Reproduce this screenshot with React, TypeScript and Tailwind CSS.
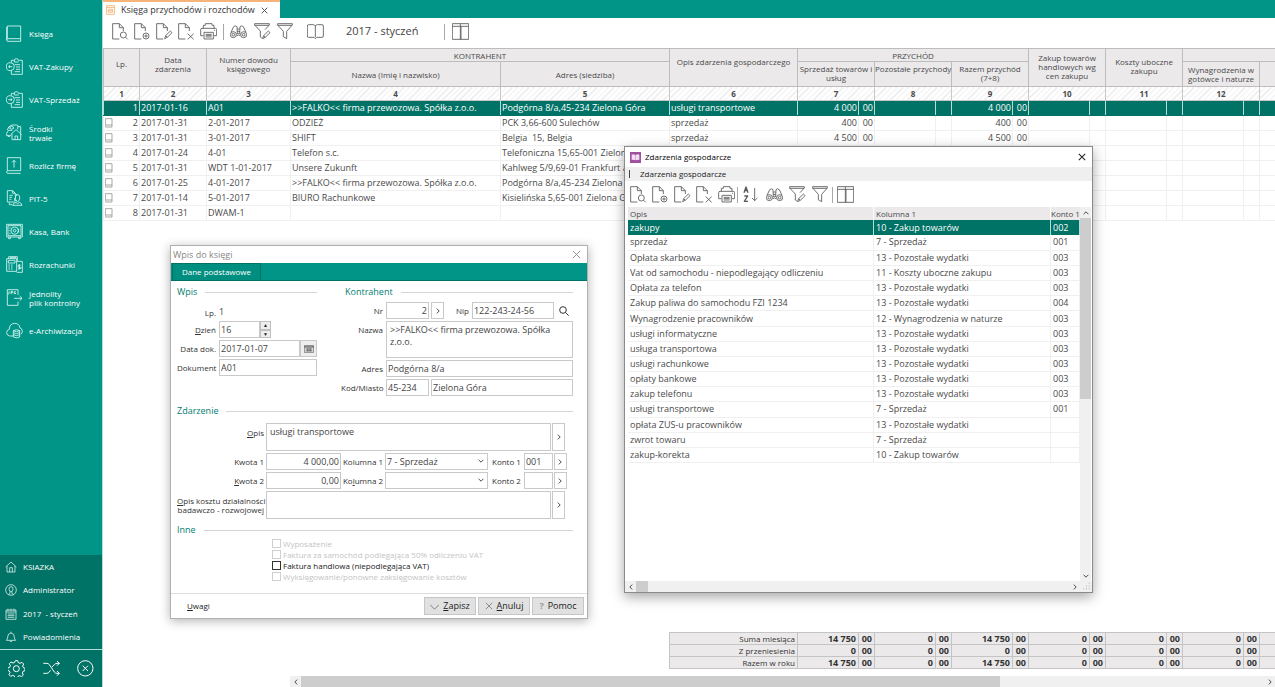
import type { ReactNode } from 'react';

type IconProps = { name: string };

const search = <path d="M41 43l6 6M25 36a9 9 0 1 0 18 0a9 9 0 1 0-18 0" />;
const page = <path d="M22 48H2V2h20l12 12v10M22 2v12h12" />;
const pencil = <path d="M26 47l3-9 14-14 5 5-14 14zM29 38l5 5" />;

const toolIcons: Record<string, ReactNode> = {
  preview: <>{page}{search}</>,
  add: <>{page}<circle cx="36" cy="39" r="9" /><path d="M36 34v10M31 39h10" /></>,
  edit: <>{page}{pencil}</>,
  remove: <>{page}<path d="M29 32l18 17M47 32l-18 17" /></>,
  print: (
    <>
      <path d="M10 16V7h6V2h20v5h6v9M10 38H2V20q0-4 4-4h40q4 0 4 4v18h-8" />
      <path d="M12 28h28v20H12zM17 34h18M17 38h18M17 42h18M42 22h3" />
    </>
  ),
  find: (
    <>
      <circle cx="10" cy="35" r="9" />
      <circle cx="41" cy="35" r="9" />
      <circle cx="10" cy="35" r="4" />
      <circle cx="41" cy="35" r="4" />
      <path d="M19 33q6-4 13 0M20 38q6-4 11 0M3 28l8-17q6-5 10 0l1 20M48 28l-8-17q-6-5-10 0l-1 20M22 18h7M21 25h9" />
    </>
  ),
  filterEdit: <><path d="M19 42V24L2 6V2h44v4L33 20M2 7h43M19 42l6 4" />{pencil}</>,
  filter: <path d="M2 2h44v4L29 25v22l-10-6V25L2 6zM2 7h43" />,
  book: <path d="M25 9v34M25 9q-2-4-6-4H5Q1 5 1 9v30q0 4 4 4h16l4 4 4-4h16q4 0 4-4V9q0-4-4-4H31q-4 0-6 4" />,
  columns: <path d="M1 2h49v47H1zM1 10h49M25 2v47M27 10v39" />,
  sort: (
    <>
      <path strokeWidth="4" d="M3 20L9 3l6 17M5 14h8M4 30h10L4 46h11" />
      <path d="M35 6v38M27 36l8 8 8-8" />
    </>
  ),
};

const ToolIcon = ({ name }: IconProps) => (
  <svg viewBox="0 0 51 51" className="h-[17px] w-[17px]" fill="none" stroke="currentColor" strokeWidth="2.6" strokeLinejoin="round">
    {toolIcons[name]}
  </svg>
);

const ToolButton = ({ name, label }: { name: string; label: string }) => (
  <button type="button" aria-label={label} title={label} className="flex h-5 w-[22px] shrink-0 items-center justify-center text-[#5a5a5a] hover:bg-gray-100">
    <ToolIcon name={name} />
  </button>
);

const Divider = () => <span className="h-4 w-px shrink-0 bg-[#a8a8a8]" />;

const navIcons: Record<string, ReactNode> = {
  ksiega: <path d="M4 3h40v38H4zM4 41q-4 4 0 8h40v-8M2 46V6" />,
  zakupy: (
    <path d="M16 14V7h9q0-5 6-5t6 5h12v42H16V38M25 7v5h13M26 20h16M30 27h12M30 34h12M26 41h16M25 26a12 12 0 1 1-24 0a12 12 0 1 1 24 0M19 26H8M12 22l-4 4 4 4" />
  ),
  sprzedaz: (
    <path d="M16 14V7h9q0-5 6-5t6 5h12v42H16V38M25 7v5h13M26 20h16M30 27h12M30 34h12M26 41h16M25 26a12 12 0 1 1-24 0a12 12 0 1 1 24 0M7 26h11M14 22l4 4-4 4" />
  ),
  srodki: (
    <path d="M14 32l16-15 17 15M18 30v17h26V30M27 47V36h8v11M35 16V8h9v20M2 28l5-9h12M2 28v7h12M6 35a3 3 0 1 0 6 0M11 13a6 6 0 1 1 12 0q-6 5-12 0M4 18q2-12 14-15h14q6 2 8 6" />
  ),
  rozlicz: <path d="M4 2h40v39H4zM4 41q-4 4 0 8h40M24 32V10M18 16l6-6 6 6" />,
  pit: (
    <path d="M26 36H4V2h16l8 8v10M20 2v8h8M10 16h10M10 22h8M10 28h6M30 14q12-2 11 10 0 9-6 11-7-2-7-11t6-10M20 46q2-8 10-9l5 4 5-4q7 2 8 9zM26 24v8h6M10 38v6h8" />
  ),
  kasa: (
    <>
      <path d="M2 4h47v38H2zM6 8h39v30H6zM8 42v5h5v-5M38 42v5h5v-5M10 15h4M10 23h4M10 31h4M38 17v12" />
      <circle cx="26" cy="23" r="11" />
      <circle cx="26" cy="23" r="4" />
    </>
  ),
  rozrachunki: (
    <path d="M34 14V2H8v6M2 8h30v38H2zM7 13h20v8H7zM7 27h5M15 27h5M7 33h5M15 33h5M7 39h5M15 39h5M32 16h17v33H32M40 24v17M44 28q-8-3-8 2t8 5-8 4M12 5h18" />
  ),
  jpk: <path d="M36 18V2H4v47h32V38M24 28h24M41 21l7 7-7 7M9 7v7q-3 3-3 0M15 15V7h5v4h-5M25 7v8M30 7l-4 4 4 4" />,
  archiwum: (
    <path d="M22 42H11Q1 40 2 31q1-8 8-9 0-17 16-18 14 0 16 14 8 2 7 11-1 6-5 8M22 26q10-6 19 0v19q-9 5-19 0zM22 26q9 6 19 0M22 32q9 6 19 0M22 38q9 6 19 0" />
  ),
};

const navItems = [
  { icon: 'ksiega', label: 'Księga' },
  { icon: 'zakupy', label: 'VAT-Zakupy' },
  { icon: 'sprzedaz', label: 'VAT-Sprzedaż' },
  { icon: 'srodki', label: 'Środki\ntrwałe' },
  { icon: 'rozlicz', label: 'Rozlicz firmę' },
  { icon: 'pit', label: 'PIT-5' },
  { icon: 'kasa', label: 'Kasa, Bank' },
  { icon: 'rozrachunki', label: 'Rozrachunki' },
  { icon: 'jpk', label: 'Jednolity\nplik kontrolny' },
  { icon: 'archiwum', label: 'e-Archiwizacja' },
];

const statusItems = [
  { label: 'KSIAZKA', d: 'M2 18L18 3l16 15M6 15v18h24V15M14 33V20h8v13' },
  { label: 'Administrator', d: 'M34 18a16 16 0 1 1-32 0a16 16 0 1 1 32 0M18 8q7 0 6 8-1 6-6 7-5-1-6-7-1-8 6-8M15 22v7l-5 3M21 22v7l5 3' },
  { label: '2017  - styczeń', d: 'M3 6h30v28H3zM3 12h30M9 2v7M18 2v7M27 2v7M8 18h20M8 23h20M8 28h20' },
  { label: 'Powiadomienia', d: 'M4 28q4-3 4-10Q8 7 18 6q10 1 10 12 0 7 4 10zM14 29q4 7 8 0M18 2v4' },
];

const gearPoints = 'M22 2h7l2 6 5 2 6-3 5 5-3 6 2 5 5 2v7l-6 2-2 5 3 6-5 5-6-3-5 2-2 5h-7l-2-6-5-2-6 3-5-5 3-6-2-5-5-2v-7l6-2 2-5-3-6 5-5 6 3 5-2z';

const Sidebar = () => (
  <aside className="flex w-[103px] shrink-0 flex-col border-r border-[#b5dcd7] bg-[#009587] text-[8px] font-medium text-white">
    <nav className="flex flex-1 flex-col pt-[17px]">
      {navItems.map((item) => (
        <a key={item.label} href="#" className="flex h-[33px] items-center gap-[6px] pl-[6px] hover:bg-[#007266]">
          <svg viewBox="0 0 51 51" className="h-[17px] w-[17px] shrink-0" fill="none" stroke="#e6fffb" strokeWidth="2.4">
            {navIcons[item.icon]}
          </svg>
          <span className="whitespace-pre leading-[9px]">{item.label}</span>
        </a>
      ))}
    </nav>
    <div className="bg-[#007266]">
      <div className="grid h-[95px] grid-rows-4 border-b border-[#b5dcd7]">
        {statusItems.map((item) => (
          <a key={item.label} href="#" className="flex items-center gap-[6px] pl-[5px]">
            <svg viewBox="0 0 36 36" className="h-3 w-3 shrink-0" fill="none" stroke="#d8f0ec" strokeWidth="2.4">
              <path d={item.d} />
            </svg>
            <span className="whitespace-pre">{item.label}</span>
          </a>
        ))}
      </div>
      <div className="flex h-[37px] items-center justify-between px-2">
        <button type="button" aria-label="Ustawienia">
          <svg viewBox="0 0 51 51" className="h-[17px] w-[17px]" fill="none" stroke="white" strokeWidth="3">
            <path d={gearPoints} />
            <circle cx="25" cy="26" r="9" />
          </svg>
        </button>
        <button type="button" aria-label="Przełącz">
          <svg viewBox="0 0 51 51" className="h-[17px] w-[17px]" fill="none" stroke="white" strokeWidth="3">
            <path d="M1 10h10q5 0 8 4l15 22q3 4 8 4h7M1 40h10q5 0 8-4l3-5M27 21l7-7q3-4 8-4h7M42 3l7 7-7 7M42 33l7 7-7 7" />
          </svg>
        </button>
        <button type="button" aria-label="Zamknij program">
          <svg viewBox="0 0 51 51" className="h-[17px] w-[17px]" fill="none" stroke="white" strokeWidth="3">
            <circle cx="25" cy="25" r="23" />
            <path d="M17 17l16 16M33 17L17 33" />
          </svg>
        </button>
      </div>
    </div>
  </aside>
);

const entries = [
  { date: '2017-01-16', doc: 'A01', name: '>>FALKO<< firma przewozowa. Spółka z.o.o.', address: 'Podgórna 8/a,45-234 Zielona Góra', event: 'usługi transportowe', amount: '4 000' },
  { date: '2017-01-31', doc: '2-01-2017', name: 'ODZIEŻ', address: 'PCK 3,66-600 Sulechów', event: 'sprzedaż', amount: '400' },
  { date: '2017-01-31', doc: '3-01-2017', name: 'SHIFT', address: 'Belgia  15, Belgia', event: 'sprzedaż', amount: '4 500' },
  { date: '2017-01-24', doc: '4-01', name: 'Telefon s.c.', address: 'Telefoniczna 15,65-001 Zielona Góra', event: '', amount: '' },
  { date: '2017-01-31', doc: 'WDT 1-01-2017', name: 'Unsere Zukunft', address: 'Kahlweg 5/9,69-01 Frankfurt am', event: '', amount: '' },
  { date: '2017-01-25', doc: '4-01-2017', name: '>>FALKO<< firma przewozowa. Spółka z.o.o.', address: 'Podgórna 8/a,45-234 Zielona Góra', event: '', amount: '' },
  { date: '2017-01-14', doc: '5-01-2017', name: 'BIURO Rachunkowe', address: 'Kisielińska 5,65-001 Zielona Góra', event: '', amount: '' },
  { date: '2017-01-31', doc: 'DWAM-1', name: '', address: '', event: '', amount: '' },
];

type HeadProps = { children?: ReactNode; rows?: number; cols?: number; className?: string };

const Head = ({ children, rows, cols, className = '' }: HeadProps) => (
  <th rowSpan={rows} colSpan={cols} className={`border border-[#bdbdbd] bg-[#ebe9ea] font-medium leading-[9px] ${className}`}>
    {children}
  </th>
);

const MoneyCols = () => (
  <>
    <col className="w-[61px]" />
    <col className="w-4" />
  </>
);

const LedgerTable = () => (
  <table className="w-[1233px] table-fixed border-collapse text-[9px] text-[#4a4a4a]">
    <colgroup>
      <col className="w-9" />
      <col className="w-[67px]" />
      <col className="w-[84px]" />
      <col className="w-[210px]" />
      <col className="w-[169px]" />
      <col className="w-32" />
      <MoneyCols />
      <MoneyCols />
      <MoneyCols />
      <MoneyCols />
      <MoneyCols />
      <MoneyCols />
      <MoneyCols />
    </colgroup>
    <thead className="text-[8px]">
      <tr className="h-[13px]">
        <Head rows={2} className="pb-2">Lp.</Head>
        <Head rows={2} className="pb-2">Data<br />zdarzenia</Head>
        <Head rows={2} className="pb-2">Numer dowodu<br />księgowego</Head>
        <Head cols={2}>KONTRAHENT</Head>
        <Head rows={2} className="pt-2 align-top">Opis zdarzenia gospodarczego</Head>
        <Head cols={6}>PRZYCHÓD</Head>
        <Head rows={2} cols={2} className="px-2 pb-[3px]">Zakup towarów handlowych wg cen zakupu</Head>
        <Head rows={2} cols={2} className="px-2 pt-2 align-top">Koszty uboczne zakupu</Head>
        <Head cols={4} />
      </tr>
      <tr className="h-[25px]">
        <Head>Nazwa (Imię i nazwisko)</Head>
        <Head>Adres (siedziba)</Head>
        <Head cols={2} className="whitespace-nowrap pt-[2px] align-top">Sprzedaż towarów i<br />usług</Head>
        <Head cols={2} className="whitespace-nowrap pt-[2px] align-top">Pozostałe przychody</Head>
        <Head cols={2} className="pt-[2px] align-top">Razem przychód<br />(7+8)</Head>
        <Head cols={2}>Wynagrodzenia w gotówce i naturze</Head>
        <Head cols={2} />
      </tr>
      <tr className="h-[14px]">
        {[1, 2, 3, 4, 5, 6, 7, 8, 9, 10, 11, 12, ''].map((n, i) => (
          <th
            key={i}
            colSpan={i > 5 ? 2 : 1}
            className="border-x border-b border-[#c8c8c8] bg-[repeating-linear-gradient(135deg,#fff_0,#fff_3px,#e9e9e9_3px,#e9e9e9_4px)] font-bold leading-[10px]"
          >
            {n}
          </th>
        ))}
      </tr>
    </thead>
    <tbody className="leading-3">
      {entries.map((entry, index) => {
        const selected = index === 0;
        const cell = `overflow-hidden whitespace-pre border px-px ${selected ? 'border-x-[#b5dcd7] border-y-[#007266]' : 'border-[#f0f0f0]'}`;
        return (
          <tr key={index} className={`h-[15px] ${selected ? 'bg-[#007266] text-white' : 'bg-white'}`}>
            <td className={cell}>
              <span className="flex items-center justify-between">
                {selected ? <span /> : (
                  <svg viewBox="3 0 30 30" className="h-[10px] w-[10px]" fill="none" stroke="#999" strokeWidth="2.6">
                    <path d="M4 2h20v19H4zM4 21q-3 3 0 6h20v-6" />
                  </svg>
                )}
                {index + 1}
              </span>
            </td>
            <td className={cell}>{entry.date}</td>
            <td className={cell}>{entry.doc}</td>
            <td className={cell}>{entry.name}</td>
            <td className={cell}>{entry.address}</td>
            <td className={cell}>{entry.event}</td>
            {[0, 1, 2, 3, 4, 5, 6].map((col) => {
              const filled = (col === 0 || col === 2) && entry.amount;
              return [
                <td key={`${col}a`} className={`${cell} text-right`}>{filled ? entry.amount : ''}</td>,
                <td key={`${col}b`} className={`${cell} text-right`}>{filled ? '00' : ''}</td>,
              ];
            })}
          </tr>
        );
      })}
    </tbody>
  </table>
);

const totals = [
  { label: 'Suma miesiąca', values: ['14 750', '0', '14 750', '0', '0', '0'] },
  { label: 'Z przeniesienia', values: ['0', '0', '0', '0', '0', '0'] },
  { label: 'Razem w roku', values: ['14 750', '0', '14 750', '0', '0', '0'] },
];

const TotalsTable = () => (
  <table className="ml-[566px] w-[667px] table-fixed border-collapse bg-[#ebe9ea] text-[9px] leading-[11px] text-[#333]">
    <colgroup>
      <col className="w-32" />
      <MoneyCols />
      <MoneyCols />
      <MoneyCols />
      <MoneyCols />
      <MoneyCols />
      <MoneyCols />
      <MoneyCols />
    </colgroup>
    <tbody>
      {totals.map((row) => (
        <tr key={row.label} className="h-3">
          <th className="border border-[#c4c4c4] px-[2px] text-right text-[8px] font-normal">{row.label}</th>
          {row.values.map((value, i) => [
            <td key={`${i}a`} className="border border-[#c4c4c4] px-[2px] text-right font-bold">{value}</td>,
            <td key={`${i}b`} className="border border-[#c4c4c4] px-[2px] text-right font-bold">00</td>,
          ])}
          <td className="border border-[#c4c4c4]" />
          <td className="border border-[#c4c4c4]" />
        </tr>
      ))}
    </tbody>
  </table>
);

const chevrons = { left: 'M7 1L3 5l4 4', right: 'M3 1l4 4-4 4', up: 'M1 7l4-4 4 4', down: 'M1 3l4 4 4-4' };

const Chevron = ({ to }: { to: keyof typeof chevrons }) => (
  <svg viewBox="0 0 10 10" className="h-[6px] w-[6px]" fill="none" stroke="#444" strokeWidth="1.6">
    <path d={chevrons[to]} />
  </svg>
);

const ScrollArrow = ({ to, label }: { to: keyof typeof chevrons; label: string }) => (
  <button type="button" aria-label={label} className="flex h-[11px] w-[11px] shrink-0 items-center justify-center">
    <Chevron to={to} />
  </button>
);

const field = 'block h-[17px] w-full min-w-0 border border-[#c9c9c9] bg-white px-px text-[9px] text-[#444] outline-none focus:border-[#009587]';
const area = 'block w-full resize-none overflow-hidden border border-[#c9c9c9] bg-white px-[3px] py-[2px] text-[9px] leading-3 text-[#444] outline-none focus:border-[#009587]';
const fieldLabel = 'whitespace-nowrap text-right text-[8px] text-[#333]';

const PickButton = ({ label, tall }: { label: string; tall?: boolean }) => (
  <button type="button" aria-label={label} className={`flex w-[13px] shrink-0 items-center justify-center border border-[#c9c9c9] bg-white ${tall ? 'h-7' : 'h-[17px]'}`}>
    <Chevron to="right" />
  </button>
);

const SectionTitle = ({ children }: { children: ReactNode }) => (
  <h3 className="flex h-4 items-center gap-2 text-[9px] text-[#007d70]">
    {children}
    <span className="h-px flex-1 bg-[#d5d5d5]" />
  </h3>
);

const checks = [
  { id: 'equipment', label: 'Wyposażenie', enabled: false },
  { id: 'car', label: 'Faktura za samochód podlegająca 50% odliczeniu VAT', enabled: false },
  { id: 'trade', label: 'Faktura handlowa (niepodlegająca VAT)', enabled: true },
  { id: 'rebook', label: 'Wyksięgowanie/ponowne zaksięgowanie kosztów', enabled: false },
];

const dialogButton = 'flex h-[18px] w-13 items-center justify-center gap-1 border border-[#c6c6c6] bg-[#e1e1e1] text-[9px] text-[#222]';

const EntryDialog = () => (
  <section role="dialog" aria-label="Wpis do księgi" className="absolute left-[170px] top-[245px] w-[418px] border border-[#b0b0b0] bg-white shadow-[0_2px_10px_rgba(0,0,0,0.3)]">
    <header className="flex h-[17px] items-center justify-between pl-[2px] pr-[6px] text-[9px] text-[#888]">
      <h2>Wpis do księgi</h2>
      <button type="button" aria-label="Zamknij">
        <svg viewBox="0 0 10 10" className="h-[9px] w-[9px]" stroke="#888"><path d="M1 1l8 8M9 1L1 9" /></svg>
      </button>
    </header>
    <div role="tablist" className="flex h-[18px] border-b border-[#007266] bg-[#009587] pl-[1px]">
      <button type="button" role="tab" aria-selected="true" className="w-[89px] border-x border-t border-[#007266] bg-[#008e80] text-[8px] font-medium leading-[14px] text-white">
        Dane podstawowe
      </button>
    </div>

    <form onSubmit={(e) => e.preventDefault()}>
      <div className="pl-[6px] pr-[14px] pt-[3px]">
        <div className="grid grid-cols-[140px_1fr] gap-x-6">
          <div>
            <SectionTitle>Wpis</SectionTitle>
            <div className="mt-[2px] grid grid-cols-[39px_1fr] items-center gap-x-[3px] gap-y-[2px]">
              <span className={`${fieldLabel} pt-1`}>Lp.</span>
              <span className="h-[17px] pt-1 text-[9px] leading-3 text-[#444]">1</span>
              <label htmlFor="day" className={fieldLabel}><u>D</u>zień</label>
              <div className="flex">
                <div className="w-[41px]"><input id="day" className={field} defaultValue="16" /></div>
                <div className="flex flex-col">
                  {['▲', '▼'].map((arrow) => (
                    <button key={arrow} type="button" aria-label={arrow === '▲' ? 'Więcej' : 'Mniej'} className="flex h-[9px] w-[11px] items-center justify-center border border-[#c0c0c0] bg-[#eee] text-[5px] leading-none text-[#222] last:h-2">
                      {arrow}
                    </button>
                  ))}
                </div>
              </div>
              <label htmlFor="docDate" className={fieldLabel}>Data dok.</label>
              <div className="flex">
                <input id="docDate" className={field} defaultValue="2017-01-07" />
                <button type="button" aria-label="Kalendarz" className="flex h-[17px] w-[17px] shrink-0 items-center justify-center border border-[#c9c9c9] bg-[#eee]">
                  <svg viewBox="0 0 30 24" className="h-2 w-[10px]" fill="none" stroke="#555" strokeWidth="2"><path d="M1 2h28v20H1zM1 4h28M1 7h28M5 12h20M5 17h20M10 9v11M15 9v11M20 9v11" /></svg>
                </button>
              </div>
              <label htmlFor="docNo" className={fieldLabel}>Dokument</label>
              <input id="docNo" className={field} defaultValue="A01" />
            </div>
          </div>

          <div>
            <div className="pl-1"><SectionTitle>Kontrahent</SectionTitle></div>
            <div className="mt-[2px] grid grid-cols-[42px_1fr] items-center gap-x-[3px] gap-y-[2px]">
              <label htmlFor="no" className={fieldLabel}>Nr</label>
              <div className="flex items-center">
                <div className="mr-[2px] w-[43px]"><input id="no" className={`${field} text-right`} defaultValue="2" /></div>
                <PickButton label="Wybierz kontrahenta" />
                <label htmlFor="nip" className={`${fieldLabel} ml-3 mr-[3px]`}>Nip</label>
                <div className="w-[82px]"><input id="nip" className={field} defaultValue="122-243-24-56" /></div>
                <button type="button" aria-label="Szukaj" className="ml-[5px]">
                  <svg viewBox="0 0 30 30" className="h-[10px] w-[10px]" fill="none" stroke="#333" strokeWidth="3"><circle cx="12" cy="12" r="10" /><path d="M19 19l10 10" /></svg>
                </button>
              </div>
              <label htmlFor="name" className={`${fieldLabel} self-start pt-[3px]`}>Nazwa</label>
              <textarea id="name" className={`${area} h-[37px]`} defaultValue=">>FALKO<< firma przewozowa. Spółka z.o.o." />
              <label htmlFor="address" className={fieldLabel}>Adres</label>
              <input id="address" className={field} defaultValue="Podgórna 8/a" />
              <label htmlFor="zip" className={fieldLabel}>Kod/Miasto</label>
              <div className="flex gap-[2px]">
                <div className="w-[43px] shrink-0"><input id="zip" className={field} defaultValue="45-234" /></div>
                <input aria-label="Miasto" className={field} defaultValue="Zielona Góra" />
              </div>
            </div>
          </div>
        </div>

        <div className="mt-[7px]">
          <SectionTitle>Zdarzenie</SectionTitle>
          <div className="mt-1 grid grid-cols-[87px_299px] items-center gap-x-[2px] gap-y-[2px]">
            <label htmlFor="desc" className={`${fieldLabel} self-start pt-1`}><u>O</u>pis</label>
            <div className="flex gap-px"><textarea id="desc" className={`${area} h-7`} defaultValue="usługi transportowe" /><PickButton label="Wybierz opis" tall /></div>
            {[1, 2].map((n) => [
              <label key={`label${n}`} htmlFor={`amount${n}`} className={fieldLabel}>{n === 1 ? 'Kwota 1' : <><u>K</u>wota 2</>}</label>,
              <div key={`row${n}`} className="flex items-center">
                <div className="w-[75px] shrink-0"><input id={`amount${n}`} className={`${field} text-right`} defaultValue={n === 1 ? '4 000,00' : '0,00'} /></div>
                <label htmlFor={`column${n}`} className={`${fieldLabel} w-[42px] shrink-0`}>{n === 1 ? 'Kolumna 1' : <>Ko<u>l</u>umna 2</>}</label>
                <div className="relative ml-[2px] w-[103px] shrink-0">
                  <select id={`column${n}`} className={`${field} appearance-none`} defaultValue={n === 1 ? '7' : ''}>
                    <option value=""></option>
                    <option value="7">7 - Sprzedaż</option>
                  </select>
                  <span className="pointer-events-none absolute right-1 top-[5px]"><Chevron to="down" /></span>
                </div>
                <label htmlFor={`account${n}`} className={`${fieldLabel} ml-1 mr-[3px] flex-1`}>Konto {n}</label>
                <div className="mr-px w-[29px] shrink-0"><input id={`account${n}`} className={field} defaultValue={n === 1 ? '001' : ''} /></div>
                <PickButton label={`Wybierz konto ${n}`} />
              </div>,
            ])}
            <label htmlFor="research" className={`${fieldLabel} leading-[9px]`}><u>O</u>pis kosztu działalności<br />badawczo - rozwojowej</label>
            <div className="flex gap-px"><textarea id="research" className={`${area} h-7`} /><PickButton label="Wybierz opis kosztu" tall /></div>
          </div>
        </div>

        <div className="mt-[3px]">
          <SectionTitle>Inne</SectionTitle>
          <div className="ml-[95px] flex flex-col text-[8px] leading-[11px]">
            {checks.map((check) => (
              <label key={check.id} htmlFor={check.id} className={`flex h-[11px] items-center gap-[2px] ${check.enabled ? 'font-medium text-[#222]' : 'text-[#c4c4c4]'}`}>
                <input id={check.id} type="checkbox" disabled={!check.enabled} className="h-[9px] w-[9px] appearance-none border border-[#333] bg-white checked:bg-[#009587] disabled:border-[#d0d0d0]" />
                {check.label}
              </label>
            ))}
          </div>
        </div>
      </div>

      <footer className="mt-[11px] flex h-[25px] items-center gap-[2px] border-t border-[#dcdcdc] pl-4 pr-[3px]">
        <button type="button" className="mr-auto text-[8px] font-medium text-[#222]"><u>U</u>wagi</button>
        <button type="submit" className={dialogButton}>
          <svg viewBox="0 0 10 10" className="h-[9px] w-[9px]" fill="none" stroke="#777"><path d="M0 3l5 5 5-5" /></svg>
          <span><u>Z</u>apisz</span>
        </button>
        <button type="button" className={dialogButton}>
          <svg viewBox="0 0 10 10" className="h-2 w-2" stroke="#777"><path d="M1 1l8 8M9 1L1 9" /></svg>
          <span><u>A</u>nuluj</span>
        </button>
        <button type="button" className={dialogButton}><span className="font-bold text-[#999]">?</span>Pomoc</button>
      </footer>
    </form>
  </section>
);

const events = [
  ['zakupy', '10 - Zakup towarów', '002'],
  ['sprzedaż', '7 - Sprzedaż', '001'],
  ['Opłata skarbowa', '13 - Pozostałe wydatki', '003'],
  ['Vat od samochodu - niepodlegający odliczeniu', '11 - Koszty uboczne zakupu', '003'],
  ['Opłata za telefon', '13 - Pozostałe wydatki', '003'],
  ['Zakup paliwa do samochodu FZI 1234', '13 - Pozostałe wydatki', '004'],
  ['Wynagrodzenie pracowników', '12 - Wynagrodzenia w naturze', '003'],
  ['usługi informatyczne', '13 - Pozostałe wydatki', '003'],
  ['usługa transportowa', '13 - Pozostałe wydatki', '003'],
  ['usługi rachunkowe', '13 - Pozostałe wydatki', '003'],
  ['opłaty bankowe', '13 - Pozostałe wydatki', '003'],
  ['zakup telefonu', '13 - Pozostałe wydatki', '003'],
  ['usługi transportowe', '7 - Sprzedaż', '001'],
  ['opłata ZUS-u pracowników', '13 - Pozostałe wydatki', ''],
  ['zwrot towaru', '7 - Sprzedaż', ''],
  ['zakup-korekta', '10 - Zakup towarów', ''],
];

const EventsDialog = () => (
  <section role="dialog" aria-label="Zdarzenia gospodarcze" className="absolute left-[624px] top-[146px] flex h-[447px] w-[469px] flex-col border border-[#8a8a8a] bg-white text-[9px] shadow-[0_4px_12px_rgba(0,0,0,0.35)]">
    <header className="flex h-5 shrink-0 items-center pl-[5px] pr-[6px] text-[8px] font-medium text-black">
      <svg viewBox="0 0 33 33" className="h-[11px] w-[11px]" fill="none">
        <rect width="33" height="33" fill="#a0509f" />
        <path d="M5 8q6-3 11 1v16q-5-3-11-1zM28 8q-6-3-11 1v16q5-3 11-1z" fill="#f3dff2" />
      </svg>
      <h2 className="ml-1">Zdarzenia gospodarcze</h2>
      <button type="button" aria-label="Zamknij" className="ml-auto">
        <svg viewBox="0 0 10 10" className="h-2 w-2" stroke="#222" strokeWidth="1.3"><path d="M1 1l8 8M9 1L1 9" /></svg>
      </button>
    </header>
    <div className="flex h-[14px] shrink-0 items-center gap-[10px] bg-[#efefef] pl-1 text-[8px] font-medium text-[#222]">
      <span className="h-2 w-px bg-[#444]" />
      Zdarzenia gospodarcze
    </div>
    <div className="flex h-[26px] shrink-0 items-center pl-[2px] pt-px">
      <ToolButton name="preview" label="Podgląd" />
      <ToolButton name="add" label="Dodaj" />
      <ToolButton name="edit" label="Edytuj" />
      <ToolButton name="remove" label="Usuń" />
      <ToolButton name="print" label="Drukuj" />
      <Divider />
      <div className="ml-[2px] mr-px flex gap-px">
        <ToolButton name="sort" label="Sortuj" />
        <ToolButton name="find" label="Znajdź" />
        <ToolButton name="filterEdit" label="Edytuj filtr" />
        <ToolButton name="filter" label="Filtr" />
      </div>
      <Divider />
      <div className="ml-px">
        <ToolButton name="columns" label="Kolumny" />
      </div>
    </div>
    <div className="flex min-h-0 flex-1 pl-[3px] pr-px">
      <div className="min-w-0 flex-1 overflow-hidden">
        <table className="h-[256px] w-full table-fixed border-collapse text-[#4a4a4a]">
          <colgroup>
            <col />
            <col className="w-[177px]" />
            <col className="w-[29px]" />
          </colgroup>
          <thead>
            <tr className="h-[13px] bg-[#ebe9ea] text-[8px] leading-3">
              <th className="border-r border-white px-[2px] text-left font-normal">Opis</th>
              <th className="border-r border-white px-[2px] text-left font-normal">Kolumna 1</th>
              <th className="whitespace-nowrap text-left font-normal">Konto 1</th>
            </tr>
          </thead>
          <tbody className="leading-3">
            {events.map((row, index) => (
              <tr key={index} className={`h-[15px] ${index === 0 ? 'bg-[#007266] text-white' : 'border-b border-[#f0f0f0]'}`}>
                {row.map((text, i) => (
                  <td key={i} className={`whitespace-nowrap border-r px-[2px] ${index === 0 ? 'border-[#b5dcd7]' : 'border-[#f0f0f0]'}`}>{text}</td>
                ))}
              </tr>
            ))}
          </tbody>
        </table>
      </div>
      <div className="flex w-[11px] flex-col bg-[#f0f0f0]">
        <ScrollArrow to="up" label="Przewiń w górę" />
        <div className="h-[181px] bg-[#cdcdcd]" />
        <div className="flex-1" />
        <ScrollArrow to="down" label="Przewiń w dół" />
      </div>
    </div>
    <div className="flex h-[11px] shrink-0 items-center bg-[#f0f0f0]">
      <ScrollArrow to="left" label="Przewiń w lewo" />
      <div className="h-full w-3 bg-[#cdcdcd]" />
      <div className="flex-1" />
      <ScrollArrow to="right" label="Przewiń w prawo" />
      <svg viewBox="0 0 12 12" className="h-[11px] w-3" fill="#aaa">
        <path d="M9 2h1v1H9zM6 5h1v1H6zM9 5h1v1H9zM3 8h1v1H3zM6 8h1v1H6zM9 8h1v1H9z" />
      </svg>
    </div>
  </section>
);

export default function App() {
  return (
    <div className="relative flex h-screen overflow-hidden bg-white font-['Open_Sans','Noto_Sans',sans-serif]">
      <Sidebar />
      <main className="flex min-w-0 flex-1 flex-col">
        <div className="flex h-[18px] shrink-0 bg-[#009587]">
          <div className="flex w-[177px] items-center border-t-2 border-[#f5b57a] bg-white pl-[3px] text-[9px] text-[#333]">
            <svg viewBox="0 0 30 33" className="h-[10px] w-[9px]" fill="none" stroke="#f5b57a" strokeWidth="3">
              <path d="M2 2h26v29H2zM2 8h26M8 14h14v10H8zM8 19h14" />
            </svg>
            <span className="ml-[6px] whitespace-nowrap">Księga przychodów i rozchodów</span>
            <button type="button" aria-label="Zamknij kartę" className="ml-[6px]">
              <svg viewBox="0 0 10 10" className="h-[7px] w-[7px]" stroke="#444" strokeWidth="1.3"><path d="M1 1l8 8M9 1L1 9" /></svg>
            </button>
          </div>
        </div>
        <div className="flex h-[30px] shrink-0 items-center pb-[3px] pl-[6px]">
          <ToolButton name="preview" label="Podgląd" />
          <ToolButton name="add" label="Dodaj" />
          <ToolButton name="edit" label="Edytuj" />
          <ToolButton name="remove" label="Usuń" />
          <ToolButton name="print" label="Drukuj" />
          <span className="w-1" />
          <Divider />
          <span className="w-[3px]" />
          <ToolButton name="find" label="Znajdź" />
          <span className="w-[2px]" />
          <ToolButton name="filterEdit" label="Edytuj filtr" />
          <span className="w-px" />
          <ToolButton name="filter" label="Filtr" />
          <span className="w-2" />
          <ToolButton name="book" label="Księga" />
          <span className="ml-5 mr-[26px] whitespace-nowrap text-[11px] text-[#444]">2017 - styczeń</span>
          <Divider />
          <span className="w-1" />
          <ToolButton name="columns" label="Kolumny" />
        </div>
        <div className="min-h-0 flex-1 overflow-hidden">
          <LedgerTable />
        </div>
        <div className="shrink-0 overflow-hidden pb-[7px]">
          <TotalsTable />
        </div>
        <div className="ml-[187px] flex h-[11px] shrink-0 items-center bg-[#f0f0f0]">
          <ScrollArrow to="left" label="Przewiń w lewo" />
          <div className="h-full w-[71%] bg-[#cdcdcd]" />
          <div className="flex-1" />
          <ScrollArrow to="right" label="Przewiń w prawo" />
        </div>
      </main>
      <EntryDialog />
      <EventsDialog />
    </div>
  );
}
